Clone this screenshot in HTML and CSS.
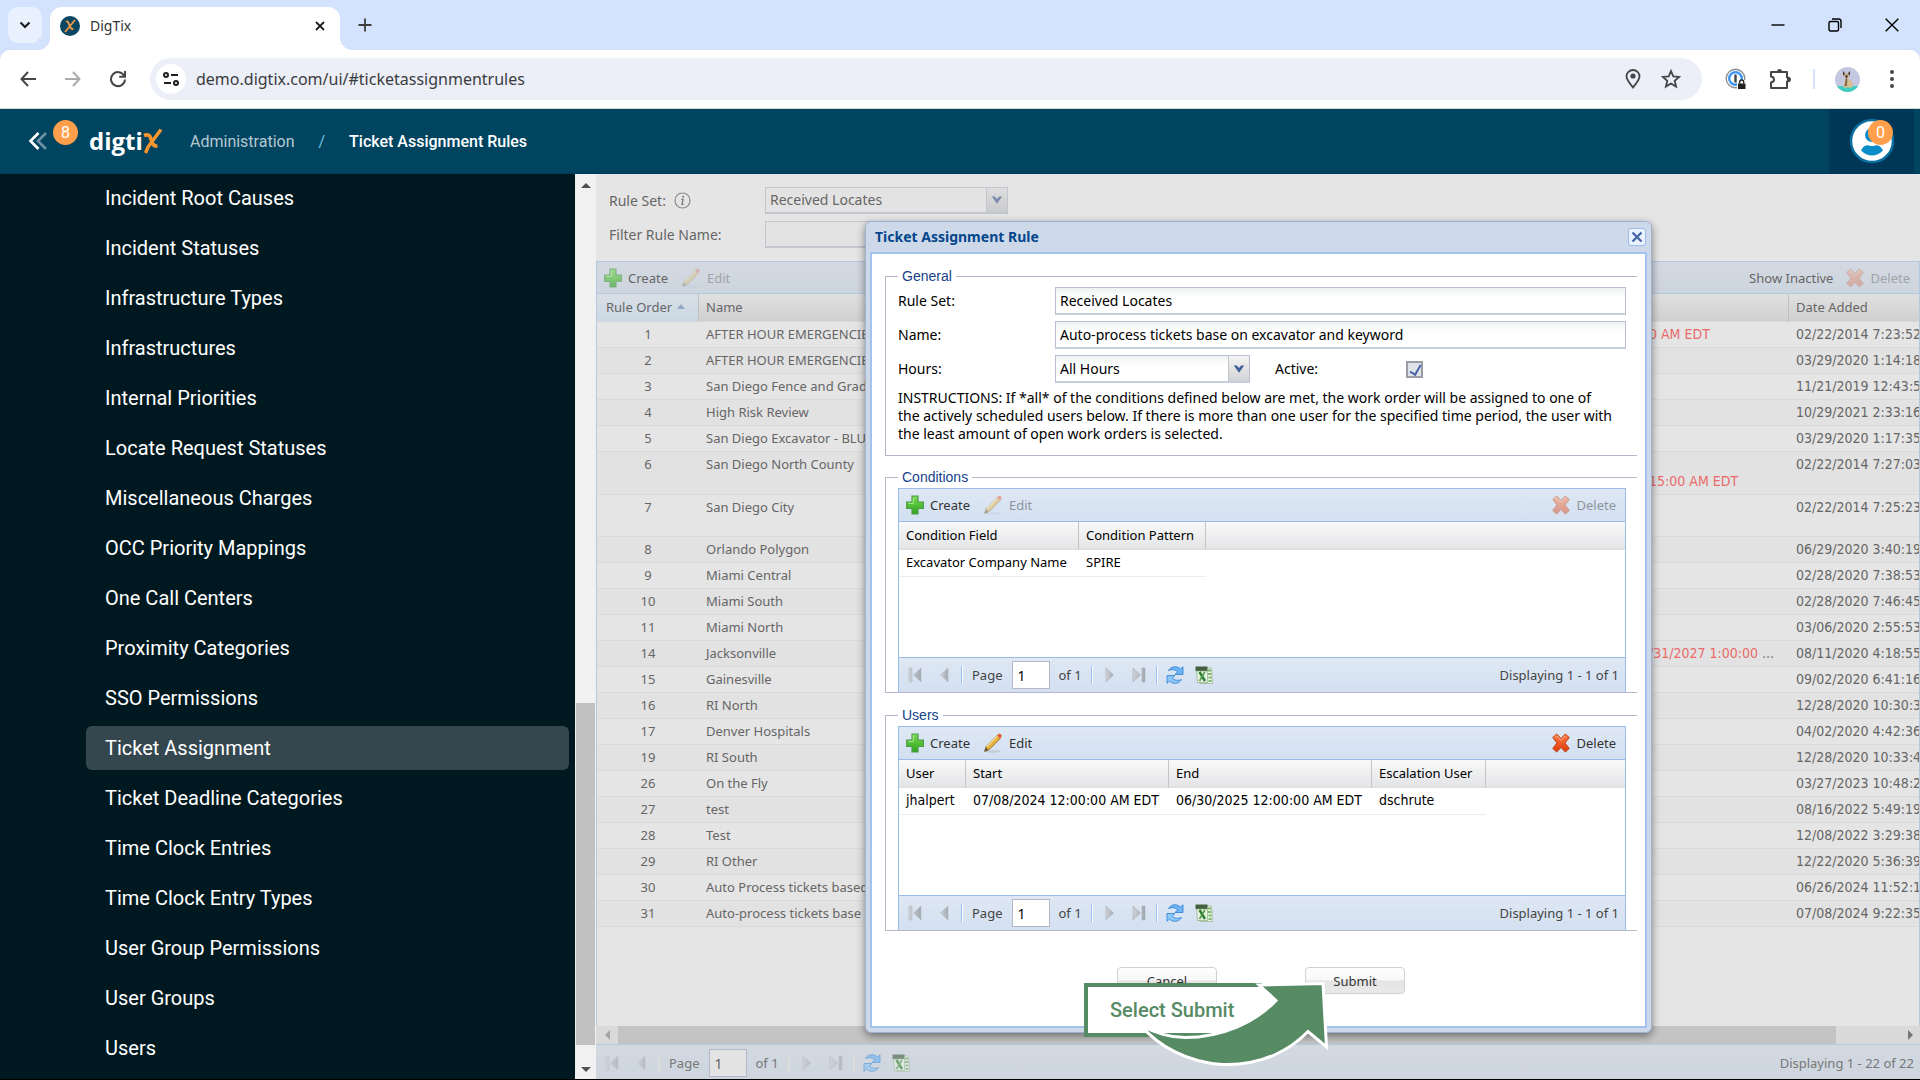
FILE: index.html
```html
<!DOCTYPE html>
<html lang="en">
<head>
	<meta charset="UTF-8">
	<title>DigTix</title>
	<link rel="stylesheet" href="styles.css">
</head>
<body>

<!-- shared icons -->
<svg class="sprite" xmlns="http://www.w3.org/2000/svg">
	<defs>
		<linearGradient id="g-plus" x1="0" y1="0" x2="0" y2="1"><stop offset="0" stop-color="#7bdc55"/><stop offset="1" stop-color="#2fa51c"/></linearGradient>
		<linearGradient id="g-del" x1="0" y1="0" x2="0" y2="1"><stop offset="0" stop-color="#ff7a45"/><stop offset="1" stop-color="#dd3a08"/></linearGradient>
		<linearGradient id="g-nav" x1="0" y1="0" x2="1" y2="0"><stop offset="0" stop-color="#d0d3d8"/><stop offset="1" stop-color="#a3a8af"/></linearGradient>
	</defs>
	<symbol id="i-plus" viewBox="0 0 18 20"><path d="M6 1h6v6h5.500v6.500h-5.500V19H6v-5.500H.700V7H6z" fill="url(#g-plus)" stroke="#4f9a48" stroke-width="1.200"/><path d="M7.300 2.500v6H2.500" fill="none" stroke="#a4ec8a" stroke-width="1"/></symbol>
	<symbol id="i-pencil" viewBox="0 0 20 20"><ellipse cx="10" cy="18.500" rx="8" ry="1.200" fill="#9aa4b0" opacity=".35"/><path d="M1.500 18.500l1.600-5L14 2.500l3.300 3L6.500 16.500z" fill="#e5ae3d" stroke="#8f7440" stroke-width=".8"/><path d="M4 13.500L14.500 3" stroke="#f9e09a" stroke-width="1.300"/><path d="M1.500 18.500l1.300-4 2.700 2.600z" fill="#5c4d36"/><path d="M14 2.500L15.500 1q1.200-.8 2.400.3t.6 2.500l-1.200 1.700z" fill="#e85a34"/></symbol>
	<symbol id="i-delete" viewBox="0 0 18 20"><path d="M.700 4.500L4.700 1 9 5.500 13.300 1 17.300 4.500 13 10 17.300 15.500 13.300 19 9 14.500 4.700 19 .700 15.500 5 10z" fill="url(#g-del)" stroke="#b9461f" stroke-width="1"/><path d="M2.700 4.500L4.500 2.800 9 7.500l4.500-4.700" fill="none" stroke="#ffb38a"/></symbol>
	<symbol id="i-first" viewBox="0 0 14 16"><path d="M1 1h3v14H1zM13 1v14L5.500 8z" fill="url(#g-nav)" stroke="#b4b9c0" stroke-width=".6"/></symbol>
	<symbol id="i-prev" viewBox="0 0 14 16"><path d="M11 1v14L3.500 8z" fill="url(#g-nav)" stroke="#b4b9c0" stroke-width=".6"/></symbol>
	<symbol id="i-next" viewBox="0 0 14 16"><path d="M3 1v14L10.500 8z" fill="url(#g-nav)" stroke="#a9aeb5" stroke-width=".6"/></symbol>
	<symbol id="i-last" viewBox="0 0 14 16"><path d="M10 1h3v14h-3zM1 1v14L8.500 8z" fill="url(#g-nav)" stroke="#a9aeb5" stroke-width=".6"/></symbol>
	<symbol id="i-refresh" viewBox="0 0 20 20"><path d="M3.500 5.500C6 1 12 .5 15.500 4L18 1.700V9.500h-8l2.700-2.700C10.500 4.500 6.500 4 3.500 5.500z" fill="#6cb4f4" stroke="#2f7ed0" stroke-width=".8"/><path d="M16.500 14.500C14 19 8 19.500 4.500 16L2 18.300V10.500h8l-2.700 2.700c2.200 2.300 6.200 2.800 9.200 1.300z" fill="#8cc8f8" stroke="#2f7ed0" stroke-width=".8"/></symbol>
	<symbol id="i-excel" viewBox="0 0 18 20"><path d="M4 3h12.500l1 15.500H5z" fill="#eaf3e4" stroke="#9db696" stroke-width=".8"/><path d="M.500 1.500h12v4.500H.500z" fill="#44603f"/><path d="M1.500 6h11v11.500h-10z" fill="#e6f1e0" stroke="#7ca574" stroke-width=".6"/><path d="M4.500 7l5.500 9" stroke="#2c7d31" stroke-width="2.400"/><path d="M9.800 7L4.500 16" stroke="#4f9a4a" stroke-width="1.500"/><path d="M13 5.500h3M13 9h3.500M13.500 12.500h3M13.500 16h3" stroke="#7cb56e" stroke-width="1.800"/></symbol>
	<symbol id="i-trigger" viewBox="0 0 12 10"><path d="M.8 1.500h3L6 4l2.200-2.500h3L6 8.800z" fill="#3f5d96"/></symbol>
</svg>

<header class="browser">
	<div class="tabstrip">
		<button class="tab-search" aria-label="Search tabs"><svg width="12" height="8" viewBox="0 0 12 8"><path d="M1.500 1.500L6 6l4.500-4.500" fill="none" stroke="#1f1f1f" stroke-width="2.200"/></svg></button>
		<div class="tab">
			<svg width="20" height="20" viewBox="0 0 20 20"><circle cx="10" cy="10" r="10" fill="#0b4762"/><path d="M6 5.500c2-.5 2.500 1 3.500 4s2 4 4 3.500M15 4L5 16" fill="none" stroke="#f39a45" stroke-width="1.800"/></svg>
			<span class="tab-title">DigTix</span>
			<button class="tab-close" aria-label="Close tab"><svg width="10" height="10" viewBox="0 0 10 10"><path d="M1 1l8 8M9 1L1 9" stroke="#1f1f1f" stroke-width="1.800"/></svg></button>
		</div>
		<button class="new-tab" aria-label="New tab"><svg width="14" height="14" viewBox="0 0 14 14"><path d="M7 .5v13M.5 7h13" stroke="#3c3c3c" stroke-width="1.800"/></svg></button>
		<div class="window-controls">
			<button aria-label="Minimize"><svg width="14" height="14" viewBox="0 0 14 14"><path d="M.5 7h13" stroke="#000" stroke-width="1.400"/></svg></button>
			<button aria-label="Restore"><svg width="14" height="14" viewBox="0 0 14 14" fill="none" stroke="#000" stroke-width="1.400"><rect x="1" y="3.500" width="9.500" height="9.500" rx="1.500"/><path d="M4 1h6.500q2.500 0 2.500 2.500V10"/></svg></button>
			<button aria-label="Close"><svg width="14" height="14" viewBox="0 0 14 14"><path d="M.7.7l12.600 12.600M13.300.7L.7 13.300" stroke="#000" stroke-width="1.400"/></svg></button>
		</div>
	</div>
	<div class="toolbar">
		<button class="nav-btn" aria-label="Back"><svg width="16" height="16" viewBox="0 0 16 16" fill="none" stroke="#444746" stroke-width="2"><path d="M8 1L1.500 8 8 15M1.500 8H16"/></svg></button>
		<button class="nav-btn" aria-label="Forward"><svg width="16" height="16" viewBox="0 0 16 16" fill="none" stroke="#aaabaa" stroke-width="2"><path d="M8 1l6.500 7L8 15M14.500 8H0"/></svg></button>
		<button class="nav-btn" aria-label="Reload"><svg width="18" height="18" viewBox="0 0 18 18" fill="none" stroke="#444746" stroke-width="2"><path d="M15.300 6A7 7 0 1 0 16 9.500M16 1v5.800h-5.800"/></svg></button>
		<div class="omnibox">
			<button class="site-info" aria-label="Site information"><svg width="16" height="14" viewBox="0 0 16 14" fill="none" stroke="#1f1f1f" stroke-width="2"><circle cx="3" cy="3" r="2"/><path d="M8 3h7M1 11h7"/><circle cx="13" cy="11" r="2"/></svg></button>
			<input class="url" type="text" aria-label="Address" value="demo.digtix.com/ui/#ticketassignmentrules">
			<button class="omni-btn" aria-label="Location"><svg width="16" height="20" viewBox="0 0 16 20"><path d="M8 18.500C4 13.500 1.500 10.500 1.500 7.500a6.500 6.500 0 0 1 13 0C14.500 10.500 12 13.500 8 18.500z" fill="none" stroke="#444746" stroke-width="1.800"/><circle cx="8" cy="7" r="2.600" fill="#444746"/></svg></button>
			<button class="omni-btn" aria-label="Bookmark"><svg width="20" height="20" viewBox="0 0 20 20"><path d="M10 2l2.300 5.400 5.900.5-4.500 3.900 1.400 5.800-5.100-3.100-5.100 3.100 1.400-5.800L1.800 7.900l5.900-.5z" fill="none" stroke="#444746" stroke-width="1.800"/></svg></button>
		</div>
		<div class="extensions">
			<button aria-label="Password manager"><svg width="22" height="22" viewBox="0 0 22 22"><circle cx="10.500" cy="10.500" r="9.300" fill="#fff" stroke="#8d9094" stroke-width="1.400"/><circle cx="10.500" cy="10.500" r="6.300" fill="none" stroke="#3f95f5" stroke-width="2.400"/><path d="M10.500 6.500v8" stroke="#444" stroke-width="2.400"/><path d="M12 12h9v9h-9z" fill="#fff"/><path d="M13 15.500h7.500V21H13z" fill="#222"/><path d="M14.700 15.500v-1.500a2 2 0 0 1 4 0v1.500" fill="none" stroke="#222" stroke-width="1.400"/></svg></button>
			<button aria-label="Extensions"><svg width="22" height="22" viewBox="0 0 22 22"><path d="M2 4h16v5.500q3 0 3 2t-3 2V20H2v-5.500q3-.5 3-3t-3-3z" fill="none" stroke="#444746" stroke-width="2" stroke-linejoin="round"/><path d="M8 4a2.500 3 0 0 1 5 0z" fill="#444746"/><path d="M18 9a3 2.500 0 0 1 0 5z" fill="#444746"/></svg></button>
			<span class="ext-divider"></span>
			<button aria-label="Profile"><svg width="25" height="25" viewBox="0 0 25 25"><defs><clipPath id="c-av"><circle cx="12.500" cy="12.500" r="12.500"/></clipPath></defs><g clip-path="url(#c-av)"><path d="M0 0h25v25H0z" fill="#c3c8e0"/><path d="M0 19h25v6H0z" fill="#3fcdc0"/><path d="M8 20.500l2.500-9h3q4 3 4.500 7l-1 2z" fill="#d9bd92"/><path d="M8 4l2 2.500h3L15 4v4.500L11.500 12 8 8.500z" fill="#c9ab82"/><path d="M8 4l2 2.500L8 8.500zM15 4l-2 2.500 2 2zM10 8.500h3L11.500 12z" fill="#3f3230"/><path d="M10.500 12h2L12 19H9.500z" fill="#8a6c50"/></g></svg></button>
			<button aria-label="Menu"><svg width="4" height="18" viewBox="0 0 4 18" fill="#444746"><circle cx="2" cy="2" r="2"/><circle cx="2" cy="9" r="2"/><circle cx="2" cy="16" r="2"/></svg></button>
		</div>
	</div>
</header>

<div class="app-header">
	<button class="collapse" aria-label="Collapse menu">
		<svg width="20" height="18" viewBox="0 0 20 18" fill="none" stroke-width="2.600"><path d="M10.500 1L2.500 9l8 8" stroke="#fff"/><path d="M18 1l-8 8 8 8" stroke="#6d92a3"/></svg>
		<span class="badge badge-menu">8</span>
	</button>
	<a class="logo" href="#"><span>digti</span><svg width="20" height="26" viewBox="0 0 20 26"><path d="M1 7.500Q6 5.500 7.500 9.500L9 14.500q1.500 4 5.500 3.500" fill="none" stroke="#f7952f" stroke-width="3.600"/><path d="M18 1.500L5 19l-2.500 6" fill="none" stroke="#f7952f" stroke-width="3.400"/></svg></a>
	<nav class="breadcrumb">
		<a href="#">Administration</a>
		<span class="slash">/</span>
		<a class="current" href="#">Ticket Assignment Rules</a>
	</nav>
	<button class="user" aria-label="Account">
		<svg width="46" height="46" viewBox="0 0 46 46"><circle cx="23" cy="23" r="21" fill="#fff" stroke="#0a6fa0" stroke-width="2.500"/><circle cx="23" cy="17" r="7" fill="#0a8cc8"/><path d="M12 32.500Q15 26.500 20 27.500q3 1.200 6 0 5-1 8 5Q29 37.500 23 37.500t-11-5z" fill="#0a8cc8"/></svg>
		<span class="badge badge-user">0</span>
	</button>
</div>

<div class="app">
	<nav class="sidebar">
		<a href="#">Incident Root Causes</a>
		<a href="#">Incident Statuses</a>
		<a href="#">Infrastructure Types</a>
		<a href="#">Infrastructures</a>
		<a href="#">Internal Priorities</a>
		<a href="#">Locate Request Statuses</a>
		<a href="#">Miscellaneous Charges</a>
		<a href="#">OCC Priority Mappings</a>
		<a href="#">One Call Centers</a>
		<a href="#">Proximity Categories</a>
		<a href="#">SSO Permissions</a>
		<a class="active" href="#">Ticket Assignment</a>
		<a href="#">Ticket Deadline Categories</a>
		<a href="#">Time Clock Entries</a>
		<a href="#">Time Clock Entry Types</a>
		<a href="#">User Group Permissions</a>
		<a href="#">User Groups</a>
		<a href="#">Users</a>
	</nav>
	<div class="vscroll">
		<span class="arrow-up"></span>
		<div class="vtrack"><div class="vthumb"></div></div>
		<span class="arrow-down"></span>
	</div>

	<main class="content">
		<div class="masked">
			<div class="filters">
				<label for="main-ruleset">Rule Set:
					<svg width="17" height="17" viewBox="0 0 17 17"><circle cx="8.500" cy="8.500" r="7.500" fill="none" stroke="#8b8b8b" stroke-width="1.200"/><path d="M7.300 7.300h1.800L8 12.300h1.500" fill="none" stroke="#777" stroke-width="1.300"/><circle cx="9.200" cy="4.800" r="1" fill="#777"/></svg>
				</label>
				<div class="combo combo-main">
					<select id="main-ruleset"><option>Received Locates</option></select>
					<span class="trigger"><svg width="12" height="10"><use href="#i-trigger"/></svg></span>
				</div>
				<label for="main-filter">Filter Rule Name:</label>
				<input id="main-filter" class="field field-filter" type="text">
			</div>

			<div class="tbar">
				<button class="tbtn"><svg width="18" height="20"><use href="#i-plus"/></svg>Create</button>
				<button class="tbtn disabled"><svg width="20" height="20"><use href="#i-pencil"/></svg>Edit</button>
				<span class="fill"></span>
				<button class="tbtn">Show Inactive</button>
				<button class="tbtn disabled"><svg width="18" height="20"><use href="#i-delete"/></svg>Delete</button>
			</div>
			<div class="rules">
				<table class="grid rules-table">
					<colgroup><col class="c-order"><col class="c-name"><col class="c-range"><col></colgroup>
					<thead>
						<tr><th class="sorted">Rule Order<span class="sort-asc"></span></th><th class="nb">Name</th><th></th><th>Date Added</th></tr>
					</thead>
					<tbody>
						<tr><td>1</td><td>AFTER HOUR EMERGENCIES</td><td class="red">0 AM EDT</td><td>02/22/2014 7:23:52</td></tr>
						<tr><td>2</td><td>AFTER HOUR EMERGENCIES</td><td></td><td>03/29/2020 1:14:18</td></tr>
						<tr><td>3</td><td>San Diego Fence and Grade</td><td></td><td>11/21/2019 12:43:5</td></tr>
						<tr><td>4</td><td>High Risk Review</td><td></td><td>10/29/2021 2:33:16</td></tr>
						<tr><td>5</td><td>San Diego Excavator - BLUE</td><td></td><td>03/29/2020 1:17:35</td></tr>
						<tr class="tall"><td>6</td><td>San Diego North County</td><td class="red"><br>15:00 AM EDT</td><td>02/22/2014 7:27:03</td></tr>
						<tr class="tall"><td>7</td><td>San Diego City</td><td></td><td>02/22/2014 7:25:23</td></tr>
						<tr><td>8</td><td>Orlando Polygon</td><td></td><td>06/29/2020 3:40:19</td></tr>
						<tr><td>9</td><td>Miami Central</td><td></td><td>02/28/2020 7:38:53</td></tr>
						<tr><td>10</td><td>Miami South</td><td></td><td>02/28/2020 7:46:45</td></tr>
						<tr><td>11</td><td>Miami North</td><td></td><td>03/06/2020 2:55:53</td></tr>
						<tr><td>14</td><td>Jacksonville</td><td class="red">/31/2027 1:00:00 <span class="more">...</span></td><td>08/11/2020 4:18:55</td></tr>
						<tr><td>15</td><td>Gainesville</td><td></td><td>09/02/2020 6:41:16</td></tr>
						<tr><td>16</td><td>RI North</td><td></td><td>12/28/2020 10:30:3</td></tr>
						<tr><td>17</td><td>Denver Hospitals</td><td></td><td>04/02/2020 4:42:36</td></tr>
						<tr><td>19</td><td>RI South</td><td></td><td>12/28/2020 10:33:4</td></tr>
						<tr><td>26</td><td>On the Fly</td><td></td><td>03/27/2023 10:48:2</td></tr>
						<tr><td>27</td><td>test</td><td></td><td>08/16/2022 5:49:19</td></tr>
						<tr><td>28</td><td>Test</td><td></td><td>12/08/2022 3:29:38</td></tr>
						<tr><td>29</td><td>RI Other</td><td></td><td>12/22/2020 5:36:39</td></tr>
						<tr><td>30</td><td>Auto Process tickets based</td><td></td><td>06/26/2024 11:52:1</td></tr>
						<tr><td>31</td><td>Auto-process tickets base</td><td></td><td>07/08/2024 9:22:35</td></tr>
					</tbody>
				</table>
			</div>
			<div class="hscroll">
				<span class="arrow-left"></span>
				<div class="htrack"><div class="hthumb"></div></div>
				<span class="arrow-right"></span>
			</div>
			<div class="pager">
				<button aria-label="First" class="off"><svg width="14" height="16"><use href="#i-first"/></svg></button>
				<button aria-label="Previous" class="off"><svg width="14" height="16"><use href="#i-prev"/></svg></button>
				<span class="sep"></span>
				<label for="pg-main">Page</label>
				<input id="pg-main" type="text" value="1">
				<span class="of">of 1</span>
				<span class="sep"></span>
				<button aria-label="Next" class="off"><svg width="14" height="16"><use href="#i-next"/></svg></button>
				<button aria-label="Last" class="off"><svg width="14" height="16"><use href="#i-last"/></svg></button>
				<span class="sep"></span>
				<button aria-label="Refresh"><svg width="20" height="20"><use href="#i-refresh"/></svg></button>
				<button aria-label="Export"><svg width="18" height="20"><use href="#i-excel"/></svg></button>
				<span class="displaying">Displaying 1 - 22 of 22</span>
			</div>
		</div>

		<!-- rule editor window -->
		<section class="window">
			<div class="window-title">
				<h1>Ticket Assignment Rule</h1>
				<button class="window-close" aria-label="Close"><svg width="12" height="12" viewBox="0 0 12 12"><path d="M1.500 1.500l9 9M10.500 1.500l-9 9" stroke="#4668a8" stroke-width="2.400"/></svg></button>
			</div>
			<form class="window-body">
				<fieldset>
					<legend>General</legend>
					<div class="form-row">
						<label for="w-ruleset">Rule Set:</label>
						<input id="w-ruleset" class="field" type="text" value="Received Locates">
					</div>
					<div class="form-row">
						<label for="w-name">Name:</label>
						<input id="w-name" class="field" type="text" value="Auto-process tickets base on excavator and keyword">
					</div>
					<div class="form-row">
						<label for="w-hours">Hours:</label>
						<div class="combo">
							<select id="w-hours"><option>All Hours</option></select>
							<span class="trigger"><svg width="12" height="10"><use href="#i-trigger"/></svg></span>
						</div>
						<label class="lbl-active" for="w-active">Active:</label>
						<input id="w-active" class="check" type="checkbox" checked>
					</div>
					<p class="instructions">INSTRUCTIONS: If *all* of the conditions defined below are met, the work order will be assigned to one of the actively scheduled users below. If there is more than one user for the specified time period, the user with the least amount of open work orders is selected.</p>
				</fieldset>

				<fieldset class="has-grid">
					<legend>Conditions</legend>
					<div class="panel">
						<div class="tbar">
							<button type="button" class="tbtn"><svg width="18" height="20"><use href="#i-plus"/></svg>Create</button>
							<button type="button" class="tbtn disabled"><svg width="20" height="20"><use href="#i-pencil"/></svg>Edit</button>
							<span class="fill"></span>
							<button type="button" class="tbtn disabled"><svg width="18" height="20"><use href="#i-delete"/></svg>Delete</button>
						</div>
						<div class="panel-body">
							<table class="grid">
								<colgroup><col class="c-field"><col class="c-pattern"><col></colgroup>
								<thead><tr><th>Condition Field</th><th>Condition Pattern</th><th></th></tr></thead>
								<tbody><tr><td>Excavator Company Name</td><td>SPIRE</td></tr></tbody>
							</table>
						</div>
						<div class="pager">
							<button type="button" aria-label="First" class="off"><svg width="14" height="16"><use href="#i-first"/></svg></button>
							<button type="button" aria-label="Previous" class="off"><svg width="14" height="16"><use href="#i-prev"/></svg></button>
							<span class="sep"></span>
							<label for="pg-cond">Page</label>
							<input id="pg-cond" type="text" value="1">
							<span class="of">of 1</span>
							<span class="sep"></span>
							<button type="button" aria-label="Next" class="off"><svg width="14" height="16"><use href="#i-next"/></svg></button>
							<button type="button" aria-label="Last" class="off"><svg width="14" height="16"><use href="#i-last"/></svg></button>
							<span class="sep"></span>
							<button type="button" aria-label="Refresh"><svg width="20" height="20"><use href="#i-refresh"/></svg></button>
							<button type="button" aria-label="Export"><svg width="18" height="20"><use href="#i-excel"/></svg></button>
							<span class="displaying">Displaying 1 - 1 of 1</span>
						</div>
					</div>
				</fieldset>

				<fieldset class="has-grid">
					<legend>Users</legend>
					<div class="panel">
						<div class="tbar">
							<button type="button" class="tbtn"><svg width="18" height="20"><use href="#i-plus"/></svg>Create</button>
							<button type="button" class="tbtn"><svg width="20" height="20"><use href="#i-pencil"/></svg>Edit</button>
							<span class="fill"></span>
							<button type="button" class="tbtn"><svg width="18" height="20"><use href="#i-delete"/></svg>Delete</button>
						</div>
						<div class="panel-body">
							<table class="grid times">
								<colgroup><col class="c-user"><col class="c-time"><col class="c-time"><col class="c-esc"><col></colgroup>
								<thead><tr><th>User</th><th>Start</th><th>End</th><th>Escalation User</th><th></th></tr></thead>
								<tbody><tr><td>jhalpert</td><td>07/08/2024 12:00:00 AM EDT</td><td>06/30/2025 12:00:00 AM EDT</td><td>dschrute</td></tr></tbody>
							</table>
						</div>
						<div class="pager">
							<button type="button" aria-label="First" class="off"><svg width="14" height="16"><use href="#i-first"/></svg></button>
							<button type="button" aria-label="Previous" class="off"><svg width="14" height="16"><use href="#i-prev"/></svg></button>
							<span class="sep"></span>
							<label for="pg-users">Page</label>
							<input id="pg-users" type="text" value="1">
							<span class="of">of 1</span>
							<span class="sep"></span>
							<button type="button" aria-label="Next" class="off"><svg width="14" height="16"><use href="#i-next"/></svg></button>
							<button type="button" aria-label="Last" class="off"><svg width="14" height="16"><use href="#i-last"/></svg></button>
							<span class="sep"></span>
							<button type="button" aria-label="Refresh"><svg width="20" height="20"><use href="#i-refresh"/></svg></button>
							<button type="button" aria-label="Export"><svg width="18" height="20"><use href="#i-excel"/></svg></button>
							<span class="displaying">Displaying 1 - 1 of 1</span>
						</div>
					</div>
				</fieldset>

				<div class="actions">
					<button type="button" class="btn">Cancel</button>
					<button type="button" class="btn">Submit</button>
					<div class="callout">
						<div class="callout-box">Select Submit</div>
						<svg class="callout-arrow" width="200" height="92" viewBox="0 0 200 92"><path d="M119 9L183 7.500 186.500 71 168 55.500C152 72 124 90 82 88.500 48 86.500 18 70 1 49.500 16 57.500 30 61.500 45 61.500 82 61.500 116 46 136 24.500z" fill="#568b64" stroke="#fff" stroke-width="3"/></svg>
					</div>
				</div>
			</form>
		</section>
	</main>
</div>
</body>
</html>
```

FILE: styles.css
```css
* {
	box-sizing: border-box;
}

body {
	margin: 0;
	height: 100vh;
	display: flex;
	flex-direction: column;
	overflow: hidden;
	border-bottom: 1px solid #000;
	font: 14px/18px "Noto Sans", Tahoma, sans-serif;
	color: #000;
}

button {
	border: 0;
	padding: 0;
	background: none;
	font: inherit;
	color: inherit;
	display: flex;
	align-items: center;
	justify-content: center;
}

a {
	text-decoration: none;
	color: inherit;
}

svg {
	flex: none;
	display: block;
}

.sprite {
	position: absolute;
	width: 0;
	height: 0;
}

/* browser chrome */

.browser {
	background: #d3e3fd;
}

.tabstrip {
	height: 50px;
	display: flex;
	align-items: center;
	padding-left: 8px;
}

.tab-search {
	width: 34px;
	height: 36px;
	border-radius: 10px;
	background: #e9f1fe;
}

.tab {
	align-self: flex-end;
	width: 290px;
	height: 43px;
	margin-left: 8px;
	padding: 0 12px 6px 10px;
	display: flex;
	align-items: center;
	gap: 10px;
	background: #fff;
	border-radius: 12px 12px 0 0;
	position: relative;
}

/* inverted corners at the foot of the tab */
.tab::before,
.tab::after {
	content: "";
	position: absolute;
	bottom: 0;
	width: 12px;
	height: 12px;
}

.tab::before {
	left: -12px;
	background: radial-gradient(circle at 0 0, #d3e3fd 12px, #fff 12px);
}

.tab::after {
	right: -12px;
	background: radial-gradient(circle at 100% 0, #d3e3fd 12px, #fff 12px);
}

.tab-title {
	flex: 1;
	font-size: 14px;
	color: #333;
}

.tab-close {
	width: 16px;
	height: 16px;
}

.new-tab {
	width: 34px;
	height: 34px;
	margin-left: 8px;
}

.window-controls {
	margin-left: auto;
	display: flex;
}

.window-controls button {
	width: 57px;
	height: 50px;
}

.toolbar {
	height: 59px;
	display: flex;
	align-items: center;
	padding: 0 18px 0 5px;
	background: #fff;
	border-radius: 10px 10px 0 0;
	border-bottom: 1px solid #d8dcd8;
}

.nav-btn {
	width: 45px;
	height: 40px;
}

.omnibox {
	flex: 1;
	height: 42px;
	margin-left: 10px;
	padding: 0 21px 0 6px;
	display: flex;
	align-items: center;
	gap: 20px;
	border-radius: 21px;
	background: #eceef8;
}

.site-info {
	width: 30px;
	height: 30px;
	border-radius: 15px;
	background: #fff;
}

.url {
	flex: 1;
	margin-left: -10px;
	padding: 0;
	border: 0;
	background: none;
	font: 16px/24px "Noto Sans", "Segoe UI", sans-serif;
	color: #3a3c3e;
}

.extensions {
	display: flex;
	align-items: center;
	gap: 22px;
	margin-left: 23px;
}

.ext-divider {
	width: 2px;
	height: 20px;
	margin-right: -2px;
	background: #d3e3fd;
}

.extensions button:last-child {
	width: 20px;
}

/* application header */

.app-header {
	height: 65px;
	flex: none;
	display: flex;
	align-items: center;
	background: #00445f;
	border-bottom: 1px solid #003a54;
	padding: 0 6px 0 28px;
	font-family: Roboto, sans-serif;
	font-size: 16px;
}

.collapse {
	position: relative;
	width: 20px;
}

.badge {
	position: absolute;
	width: 25px;
	height: 25px;
	border-radius: 50%;
	background: #ff9f4b;
	color: #fff;
	font-size: 16px;
	line-height: 25px;
	text-align: center;
	font-family: Roboto, sans-serif;
}

.badge-menu {
	left: 25px;
	top: -12px;
}

.badge-user {
	left: 39px;
	top: 11px;
}

.logo {
	display: flex;
	align-items: center;
	width: 101px;
	margin-left: 41px;
	color: #fff;
	font: bold 24px/30px "Open Sans", sans-serif;
}

.breadcrumb {
	display: flex;
	gap: 24px;
	padding-top: 2px;
	color: #fff;
}

.breadcrumb a:first-child {
	color: #b5c9d2;
}

.slash {
	color: #6fc0dd;
}

.breadcrumb .current {
	font-weight: 500;
}

.user {
	position: relative;
	width: 85px;
	height: 64px;
	margin-left: auto;
	background: #003656;
}

/* layout */

.app {
	flex: 1;
	min-height: 0;
	display: flex;
}

.sidebar {
	width: 575px;
	flex: none;
	display: flex;
	flex-direction: column;
	gap: 6px;
	padding: 2px 6px 0 86px;
	overflow: hidden;
	background: #001921;
	font: 20px/44px Roboto, sans-serif;
	color: #fff;
}

.sidebar a {
	flex: none;
	height: 44px;
	padding-left: 19px;
	border-radius: 6px;
}

.sidebar a.active {
	background: #34474e;
}

.vscroll {
	width: 21px;
	flex: none;
	display: flex;
	flex-direction: column;
	align-items: center;
	justify-content: space-between;
	padding: 9px 1px 7px;
	background: #f1f1f1;
}

.vtrack {
	flex: 1;
	align-self: stretch;
	display: flex;
	flex-direction: column;
	justify-content: flex-end;
	padding: 22px 0;
}

.vthumb {
	height: 41%;
	background: #c1c1c1;
}

.arrow-up,
.arrow-down {
	border: 5px solid transparent;
}

.arrow-up {
	border-top: 0;
	border-bottom-color: #505050;
}

.arrow-down {
	border-bottom: 0;
	border-top-color: #505050;
}

.content {
	flex: 1;
	min-width: 0;
	position: relative;
}

.masked {
	height: 100%;
	display: flex;
	flex-direction: column;
	background: #e5e5e5;
	color: #666;
}

.masked .tbtn svg,
.masked .pager svg,
.masked .trigger svg {
	opacity: .6;
}

.filters {
	display: grid;
	grid-template-columns: 156px 243px;
	grid-auto-rows: 27px;
	align-items: center;
	gap: 7px 0;
	padding: 13px;
}

.filters label {
	display: flex;
	align-items: center;
	gap: 8px;
}

.field,
.combo select {
	height: 28px;
	padding: 0 4px;
	border: 1px solid #b9bed0;
	border-bottom-width: 2px;
	border-bottom-color: #c9cede;
	background: linear-gradient(#f0f2f2, #fff 10px);
	font: inherit;
	color: inherit;
	border-radius: 0;
}

.combo {
	position: relative;
	width: 195px;
}

.combo select {
	width: 100%;
	appearance: none;
}

.trigger {
	position: absolute;
	top: 1px;
	right: 1px;
	bottom: 2px;
	width: 21px;
	display: flex;
	align-items: center;
	justify-content: center;
	border-left: 1px solid #c3c6cd;
	background: linear-gradient(#f4f4f4, #d2d3d5);
	pointer-events: none;
}

.combo-main {
	width: auto;
}

.masked .field,
.masked .combo select {
	height: 27px;
	background: #e3e3e3;
	border-color: #c3c6cf;
}

.masked .trigger {
	background: linear-gradient(#dedede, #cacbcd);
}

/* toolbars */

.tbar {
	height: 33px;
	flex: none;
	display: flex;
	align-items: center;
	gap: 13px;
	padding: 0 9px 0 7px;
	border-bottom: 1px solid #99bce8;
	background: linear-gradient(#dfe8f4, #d3e0f1);
	font-size: 13px;
	color: #333;
}

.tbtn {
	gap: 6px;
}

.tbtn.disabled {
	opacity: .45;
}

.fill {
	flex: 1;
}

.masked .tbar {
	border: 1px solid #b4c8e0;
	background: linear-gradient(#d3d9e1, #cdd5de);
	color: #666;
}

/* grids */

.grid {
	width: 100%;
	table-layout: fixed;
	border-collapse: separate;
	border-spacing: 0;
	font: 13px/17px "Noto Sans", Tahoma, sans-serif;
}

.grid th {
	height: 28px;
	padding: 0 7px;
	border-right: 1px solid #c5c5c5;
	border-bottom: 1px solid #dedede;
	background: linear-gradient(#f9f9f9, #e3e4e6);
	font-weight: normal;
	text-align: left;
	white-space: nowrap;
}

.grid th:last-child {
	border-right: 0;
}

.grid td {
	height: 27px;
	padding: 4px 7px;
	border-bottom: 1px solid #ededed;
	vertical-align: top;
	white-space: nowrap;
}

/* timestamps use the condensed digits */
.rules-table td:last-child,
.rules-table td.red,
.times td {
	font-family: "DejaVu Sans Condensed", Tahoma, sans-serif;
	font-size: 14px;
}

.rules {
	flex: 1;
	min-height: 0;
	overflow: hidden;
	border-left: 1px solid #b4c8e0;
	border-right: 1px solid #b4c8e0;
}

.rules-table th {
	border-right-color: #c0c0c0;
	border-bottom-color: #d8d8d8;
	background: linear-gradient(#e0e0e0, #d0d0d1);
}

.rules-table th.nb {
	border-right: 0;
}

.rules-table th.sorted {
	padding-left: 9px;
	background: linear-gradient(#d9dfe6, #cbd8e4);
}

.sort-asc {
	display: inline-block;
	margin: 0 0 3px 5px;
	border: 4px solid transparent;
	border-top: 0;
	border-bottom: 5px solid #93a9c8;
}

.rules-table td {
	height: 26px;
	border-bottom-color: #dadada;
}

.rules-table tbody tr:nth-child(even) {
	background: #e2e2e2;
}

.rules-table .tall td {
	height: 42px;
}

.rules-table td:first-child {
	text-align: center;
}

.rules-table td:last-child {
	padding-right: 0;
}

.rules-table td.red {
	padding-left: 4px;
	color: #ea6a6a;
}

.more {
	color: #777;
}

.c-order { width: 102px; }
.c-name { width: 946px; }
.c-range { width: 144px; }
.c-field { width: 180px; }
.c-pattern { width: 127px; }
.c-user { width: 67px; }
.c-time { width: 203px; }
.c-esc { width: 114px; }

.hscroll {
	height: 18px;
	flex: none;
	display: flex;
	align-items: center;
	justify-content: space-between;
	padding: 0 7px 0 9px;
	background: #dadada;
}

.htrack {
	flex: 1;
	align-self: stretch;
	margin: 0 8px;
}

.hthumb {
	width: 95%;
	height: 100%;
	background: #c4c4c4;
}

.arrow-left,
.arrow-right {
	border: 5px solid transparent;
}

.arrow-left {
	border-left: 0;
	border-right-color: #a5a5a5;
}

.arrow-right {
	border-right: 0;
	border-left-color: #777;
}

/* paging bar */

.pager {
	height: 35px;
	flex: none;
	display: flex;
	align-items: center;
	gap: 5px;
	padding: 0 6px 0 4px;
	border-top: 1px solid #99bce8;
	background: linear-gradient(#dfe8f4, #d3e0f1);
	font-size: 13px;
	color: #444;
}

.pager button {
	width: 24px;
	height: 24px;
}

.pager label,
.pager .of {
	padding: 0 4px;
}

.pager input {
	width: 38px;
	height: 28px;
	padding: 0 5px;
	border: 1px solid #b5b8c8;
	background: #fff;
	font: inherit;
	font-size: 14px;
	color: #000;
}

.sep {
	width: 2px;
	height: 18px;
	border-left: 1px solid #98c0f4;
	border-right: 1px solid #fff;
}

.displaying {
	margin-left: auto;
}

.masked .pager {
	padding-top: 2px;
	border-color: #b4c8e0;
	background: linear-gradient(#d3d9e1, #cdd5de);
	color: #777;
}

.masked .pager input {
	background: #e3e3e3;
	color: #666;
}

.masked .sep {
	border-color: #b4c8e0 #dcdcdc;
}

/* window */

.window {
	position: absolute;
	top: 47px;
	left: 269px;
	width: 787px;
	padding: 0 4px 4px;
	border: 1px solid #9fb3cf;
	border-radius: 6px;
	background: #cdd9e8;
	box-shadow: 0 3px 8px rgba(0, 0, 0, .45);
}

.window-title {
	height: 30px;
	display: flex;
	align-items: center;
	justify-content: space-between;
	padding: 0 1px 0 5px;
}

.window-title h1 {
	margin: 0;
	font-size: 14px;
	line-height: 18px;
	color: #04468c;
}

.window-close {
	width: 18px;
	height: 18px;
	border: 1px solid #9dbbe8;
	border-radius: 3px;
	background: #eaf2fd;
}

.window-body {
	padding: 13px 8px 32px 13px;
	border: 2px solid #a3c3ee;
	background: #fff;
}

fieldset {
	margin: 0 0 12px;
	padding: 2px 11px 12px 12px;
	border: 1px solid #b5b8c8;
	border-right: 0;
	min-width: 0;
}

fieldset.has-grid {
	padding-bottom: 0;
	margin-bottom: 13px;
}

legend {
	padding: 0 4px;
	font: 14px/18px "Liberation Sans", Arial, sans-serif;
	color: #15428b;
}

.form-row {
	display: flex;
	align-items: center;
	margin-bottom: 6px;
}

.form-row label {
	width: 157px;
}

.form-row .field {
	flex: 1;
}

.form-row .lbl-active {
	width: 131px;
	margin-left: 25px;
}

.check {
	appearance: none;
	width: 17px;
	height: 17px;
	margin: 0;
	border: 2px solid #9a9da3;
	background: #dfe3ea;
	position: relative;
}

.check:checked::after {
	content: "";
	position: absolute;
	left: 4px;
	top: 0;
	width: 5px;
	height: 10px;
	border: solid #4a62a8;
	border-width: 0 2px 2px 0;
	transform: rotate(30deg);
}

.instructions {
	margin: 0;
	padding-right: 10px;
}

.panel {
	border: 1px solid #99bce8;
	border-bottom: 0;
}

.panel-body {
	height: 135px;
}

.actions {
	position: relative;
	display: flex;
	justify-content: center;
	gap: 88px;
	margin-top: 36px;
}

.btn {
	width: 100px;
	height: 27px;
	border: 1px solid #d1d1d1;
	border-radius: 4px;
	background: linear-gradient(#fff, #f7f7f7 48%, #e4e4e4 52%, #e9e9e9);
	font-size: 13px;
	color: #333;
}

/* callout over the buttons */

.callout {
	position: absolute;
	top: 16px;
	left: 199px;
}

.callout-box {
	width: 178px;
	height: 54px;
	padding-left: 22px;
	border: 4px solid #568b64;
	border-right: 0;
	background: #fff;
	font: 500 20px/46px Roboto, sans-serif;
	color: #568b64;
}

.callout-arrow {
	position: absolute;
	left: 56px;
	top: -7px;
}
```
